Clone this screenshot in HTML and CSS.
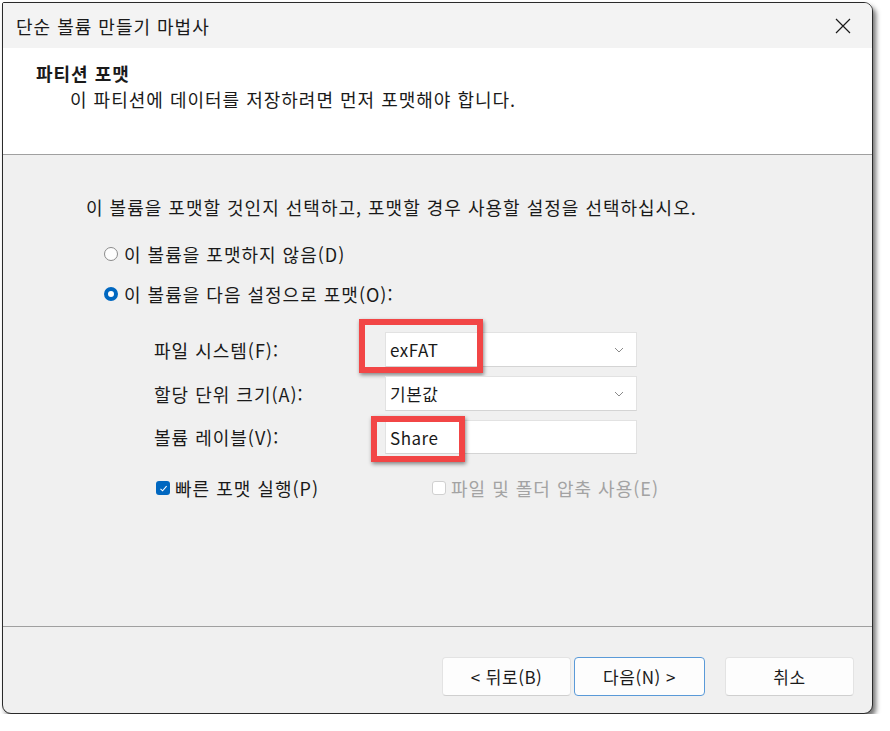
FILE: index.html
```html
<!DOCTYPE html>
<html lang="ko">
  <head>
    <meta charset="UTF-8" />
    <title>단순 볼륨 만들기 마법사</title>
    <link rel="stylesheet" href="styles.css">
  </head>
  <body>
    <div class="window">
      <div class="titlebar">
        <span class="title">단순 볼륨 만들기 마법사</span>
        <span class="close">
          <svg width="16" height="16" viewBox="0 0 16 16"><path d="M1 1L15 15M15 1L1 15" stroke="#1a1a1a" stroke-width="1.2" fill="none"/></svg>
        </span>
      </div>
      <div class="header">
        <h2>파티션 포맷</h2>
        <p>이 파티션에 데이터를 저장하려면 먼저 포맷해야 합니다.</p>
      </div>
      <div class="content">
        <p class="intro">이 볼륨을 포맷할 것인지 선택하고, 포맷할 경우 사용할 설정을 선택하십시오.</p>
        <div class="option">
          <span class="radio"></span>
          <span>이 볼륨을 포맷하지 않음(D)</span>
        </div>
        <div class="option">
          <span class="radio checked"></span>
          <span>이 볼륨을 다음 설정으로 포맷(O):</span>
        </div>
        <div class="form">
          <label>파일 시스템(F):</label>
          <div class="field combo">
            <span>exFAT</span>
            <svg class="chev" width="10" height="6" viewBox="0 0 10 6"><path d="M1 1L5 5L9 1" stroke="#8a8a8a" fill="none"/></svg>
            <span class="mark mark-fs"></span>
          </div>
          <label>할당 단위 크기(A):</label>
          <div class="field combo">
            <span>기본값</span>
            <svg class="chev" width="10" height="6" viewBox="0 0 10 6"><path d="M1 1L5 5L9 1" stroke="#8a8a8a" fill="none"/></svg>
          </div>
          <label>볼륨 레이블(V):</label>
          <div class="field">
            <span>Share</span>
            <span class="mark mark-label"></span>
          </div>
        </div>
        <div class="checks">
          <div class="check-item first">
            <span class="checkbox checked">
              <svg width="9" height="9" viewBox="0 0 9 9"><path d="M1.5 4.8L3.6 6.8L7.6 2.2" stroke="#fff" stroke-width="1.1" fill="none"/></svg>
            </span>
            <span>빠른 포맷 실행(P)</span>
          </div>
          <div class="check-item disabled">
            <span class="checkbox"></span>
            <span>파일 및 폴더 압축 사용(E)</span>
          </div>
        </div>
      </div>
      <div class="footer">
        <button class="btn">&lt; 뒤로(B)</button>
        <button class="btn primary">다음(N) &gt;</button>
        <button class="btn cancel">취소</button>
      </div>
    </div>
  </body>
</html>
```

FILE: styles.css
```css
* {
  box-sizing: border-box;
}
body {
  margin: 0;
  background: #fff;
  font-family: "Noto Sans CJK KR", "Noto Sans", sans-serif;
  font-size: 18px;
  letter-spacing: 1px;
  color: #1a1a1a;
}
.window {
  margin: 2px 0 0 2px;
  width: 871px;
  height: 712px;
  border: 1px solid #2a2a2a;
  border-radius: 2px 9px 9px 9px;
  box-shadow: 3px 4px 5px rgba(0, 0, 0, 0.55);
  background: #f0f0f0;
  display: flex;
  flex-direction: column;
  overflow: hidden;
}
.titlebar {
  height: 45px;
  background: #f3f3f3;
  display: flex;
  align-items: center;
  justify-content: space-between;
  padding: 0 14px 0 13px;
}
.close {
  display: flex;
  width: 30px;
  justify-content: center;
}
.header {
  height: 107px;
  background: #fff;
  padding: 13px 0 0 33px;
  border-bottom: 1px solid #a0a0a0;
}
.header h2 {
  margin: 0;
  font-size: 18px;
  font-weight: bold;
  line-height: 24px;
}
.header p {
  margin: 2px 0 0 34px;
  line-height: 24px;
}
.content {
  flex: 1;
  padding: 40px 0 0 83px;
  border-bottom: 1px solid #a0a0a0;
}
.intro {
  margin: 0 0 15px;
  line-height: 24px;
}
.option {
  display: flex;
  align-items: center;
  gap: 6px;
  height: 40px;
  padding-left: 18px;
}
.radio {
  width: 14px;
  height: 14px;
  border-radius: 50%;
  border: 1px solid #8a8a8a;
  background: #fdfdfd;
}
.radio.checked {
  border: 4px solid #0067c0;
  background: #fff;
}
.form {
  display: grid;
  grid-template-columns: 231px 252px;
  row-gap: 9px;
  align-items: center;
  margin: 18px 0 0 68px;
}
.field {
  position: relative;
  height: 35px;
  background: #fff;
  border: 1px solid #e2e2e2;
  border-bottom-color: #d4d4d4;
  display: flex;
  align-items: center;
  justify-content: space-between;
  padding: 0 12px 0 4px;
  font-size: 17px;
  letter-spacing: 0.5px;
}
.form .field:last-child {
  height: 34px;
}
.chev {
  display: block;
}
.mark {
  position: absolute;
  border: 6px solid #f24646;
  box-shadow: 1px 2px 4px rgba(0, 0, 0, 0.45);
}
.mark-fs {
  left: -27px;
  top: -14px;
  width: 124px;
  height: 54px;
}
.mark-label {
  left: -15px;
  top: -5px;
  width: 94px;
  height: 46px;
}
.checks {
  display: flex;
  align-items: center;
  margin: 21px 0 0 70px;
}
.check-item {
  display: flex;
  align-items: center;
  gap: 5px;
}
.check-item.first {
  width: 276px;
}
.check-item.disabled {
  color: #a3a3a3;
}
.checkbox {
  width: 14px;
  height: 14px;
  border-radius: 3px;
  border: 1px solid #d0d0d0;
  background: #fff;
  display: flex;
  align-items: center;
  justify-content: center;
}
.checkbox.checked {
  border: none;
  background: #0067c0;
}
.footer {
  height: 86px;
  display: flex;
  align-items: flex-start;
  justify-content: flex-end;
  padding: 30px 18px 0 0;
  gap: 3px;
}
.btn {
  width: 129px;
  height: 39px;
  font-family: inherit;
  font-size: 17px;
  letter-spacing: 0.5px;
  color: #1a1a1a;
  background: #fdfdfd;
  border: 1px solid #e3e3e3;
  border-bottom-color: #cfcfcf;
  border-radius: 4px;
}
.btn.primary {
  width: 131px;
  border: 1px solid #5a9ad8;
}
.btn.cancel {
  margin-left: 17px;
}
```
